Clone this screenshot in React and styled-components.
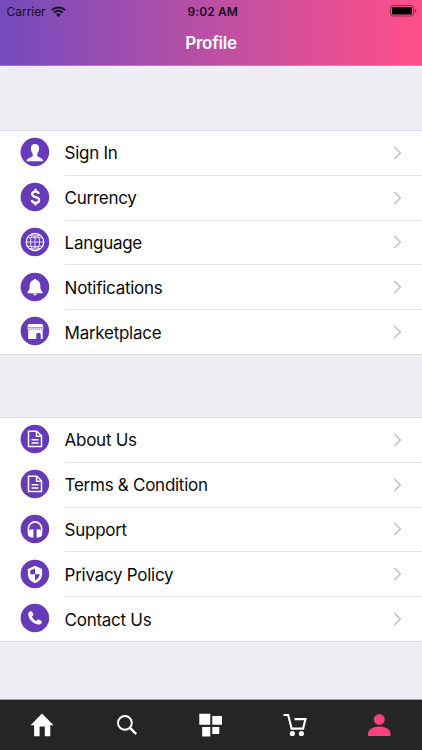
import styled, { createGlobalStyle } from "styled-components";

const accountItems = [
  { label: "Sign In", icon: "person" },
  { label: "Currency", icon: "dollar" },
  { label: "Language", icon: "globe" },
  { label: "Notifications", icon: "bell" },
  { label: "Marketplace", icon: "store" },
];

const infoItems = [
  { label: "About Us", icon: "doc" },
  { label: "Terms & Condition", icon: "doc" },
  { label: "Support", icon: "headphones" },
  { label: "Privacy Policy", icon: "shield" },
  { label: "Contact Us", icon: "phone" },
];

// all drawn on a 28x28 badge
const glyphs = {
  person: (
    <path
      fill="#fff"
      d="M14 6c2.900 0 4.200 1.800 4.100 4.500-.1 2.200-.8 4.100-1.800 5.200v2.200c.3 1.200 5.600 1.700 6.100 5.300H5.600c.5-3.600 5.800-4.100 6.100-5.300v-2.200c-1-1.100-1.700-3-1.800-5.200C9.800 7.800 11.100 6 14 6z"
    />
  ),
  dollar: (
    <g fill="none" stroke="#fff" strokeWidth="2.200">
      <path d="M17.900 10.900c-.4-1.500-1.700-2.300-3.400-2.300-1.900 0-3.300 1-3.300 2.600 0 3.900 7 1.900 7 5.800 0 1.700-1.500 2.800-3.600 2.800s-3.600-1.100-3.800-2.800" />
      <path d="M14.500 5.700v3M14.500 19.600v3" />
    </g>
  ),
  globe: (
    <g fill="none" stroke="#fff" strokeWidth="0.8">
      <circle cx="14" cy="14" r="8.700" strokeWidth="1.200" />
      <ellipse cx="14" cy="14" rx="4.500" ry="8.700" />
      <path d="M14 5.300v17.400M5.300 14h17.400M6.400 9.700h15.200M6.400 18.300h15.200M8.500 7.300q5.500 2 11 0M8.500 20.700q5.500-2 11 0" />
    </g>
  ),
  bell: (
    <path
      fill="#fff"
      d="M14 6c.8 0 1.200.5 1.300 1.100 2.800.6 4 2.800 4 5.400 0 3.700.4 5 2.200 6.400v1.400h-15v-1.400c1.800-1.400 2.200-2.700 2.200-6.400 0-2.600 1.200-4.800 4-5.400C12.800 6.500 13.200 6 14 6zM12.200 20.700h3.600c0 1-.8 1.600-1.800 1.600s-1.800-.6-1.800-1.600z"
    />
  ),
  store: (
    <>
      <path
        fill="#fff"
        d="M7.200 7h14.400l.9 3.600H6.300zM6.300 11.200h16.200v.9q-1 1.400-2 .2-1 1.200-2 0-1 1.200-2.100 0-1 1.200-2 0-1 1.200-2 0-1 1.200-2.100 0-1 1.200-2 0-1 1.200-2-.2z"
      />
      <path
        fill="#fff"
        d="M7.200 13h14.500v8.900h-2v-4.400c0-1-.7-1.600-1.600-1.600h-1.200c-1 0-1.600.6-1.600 1.600v4.400H7.200z"
      />
    </>
  ),
  doc: (
    <path
      fill="none"
      stroke="#fff"
      strokeWidth="1.500"
      d="M7.500 6.200h8.400l4.600 4.500v10.800h-13zM15.500 6.200v5h5M10.500 14.700h7M10.500 17.900h7"
    />
  ),
  headphones: (
    <>
      <path fill="none" stroke="#fff" strokeWidth="1.600" d="M7.400 17v-3.500a6.600 6.600 0 0 1 13.200 0V17" />
      <path
        fill="#fff"
        d="M12.400 14.200v8.400c-3.600.3-5.700-1.200-5.700-4.300s2.100-4.200 5.700-4.100zM15.600 14.200c3.600-.1 5.700 1 5.700 4.100s-2.100 4.600-5.700 4.300z"
      />
    </>
  ),
  shield: (
    <>
      <path fill="#fff" d="M14 5.800l7.100 3.100v5c0 4.300-2.800 7.700-7.100 9-4.300-1.300-7.100-4.700-7.100-9v-5z" />
      <path fill="#673ab7" d="M14 8.600v5.700h4.700c-.3 2.700-2 4.900-4.700 6v-6H9.200v-3.800z" />
    </>
  ),
  phone: (
    <path
      fill="#fff"
      d="M9.500 7.300c.8-.3 1.500.1 1.900.9l.9 1.900c.3.700.2 1.200-.4 1.700l-1 .8c.9 2 2.400 3.500 4.500 4.500l1-1.100c.4-.5 1-.6 1.600-.3l2.100 1c.8.4 1 1 .6 1.800-.6 1.300-1.500 2.200-2.900 2.100C12.300 20.300 7.300 15 7.200 10c0-1.400.9-2.300 2.300-2.700z"
    />
  ),
};

const Menu = ({ items }) => (
  <List>
    {items.map(({ label, icon }) => (
      <Row key={label}>
        <Badge width={28} height={28} viewBox="0 0 28 28">
          <circle cx="13.900" cy="14" r="14.300" fill="#673ab7" />
          {glyphs[icon]}
        </Badge>
        <RowBody>
          <Label>{label}</Label>
          <svg width={9} height={14} viewBox="0 0 9 14">
            <path d="M1.300 1l6 6-6 6" fill="none" stroke="#c4c4c8" strokeWidth="1.700" />
          </svg>
        </RowBody>
      </Row>
    ))}
  </List>
);

const App = () => (
  <Screen>
    <GlobalStyle />
    <Header>
      <StatusBar>
        <Carrier>
          Carrier
          <svg width={15} height={11} viewBox="0 0 15 11">
            <g fill="none" stroke="#180d24" strokeWidth="2">
              <path d="M.8 4.100a9.600 9.600 0 0 1 13.400 0M3.100 6.500a6.300 6.300 0 0 1 8.800 0" />
            </g>
            <path fill="#180d24" d="M5 8.500a3.600 3.600 0 0 1 5 0L7.500 11z" />
          </svg>
        </Carrier>
        <Clock>9:02 AM</Clock>
        <Battery width={27} height={12} viewBox="0 0 27 12">
          <rect x=".5" y=".5" width="23" height="10.500" rx="2.500" fill="none" stroke="#000" strokeOpacity=".45" />
          <rect x="2" y="2" width="20" height="7.500" rx="1.300" />
          <path d="M25 4v4c1-.4 1.400-1.100 1.400-2s-.4-1.600-1.400-2z" fillOpacity=".45" />
        </Battery>
      </StatusBar>
      <Title>Profile</Title>
    </Header>
    <Content>
      <Menu items={accountItems} />
      <Menu items={infoItems} />
    </Content>
    <TabBar>
      <Tab>
        <svg width={24} height={24} viewBox="0 0 24 24" fill="#fff">
          <path d="M12 .4L23.500 12.200h-3.200v11h-5.500v-9.700H9.600v9.700H4.100v-11H.6z" />
        </svg>
      </Tab>
      <Tab>
        <svg width={22} height={22} viewBox="0 0 22 22" fill="none" stroke="#fff">
          <circle cx="8.900" cy="8.900" r="6.900" strokeWidth="1.900" />
          <path d="M13.700 13.700l6.500 6.500" strokeWidth="2.400" />
        </svg>
      </Tab>
      <Tab>
        <svg width={24} height={24} viewBox="0 0 24 24" fill="#fff">
          <path d="M.3.700h11v11h-11zM13.300 3H23v8.700h-9.700zM3.200 14h8.100v9.600H3.200zM13.300 14h7v7h-7z" />
        </svg>
      </Tab>
      <Tab>
        <svg width={24} height={24} viewBox="0 0 24 24" fill="none" stroke="#fff" strokeWidth="2.100">
          <path d="M.5 2h4.700l3.400 13.600h11.500l2.400-9.500H11.500" />
          <circle cx="9.300" cy="20.500" r="2.600" fill="#fff" stroke="none" />
          <circle cx="18.400" cy="20.500" r="2.600" fill="#fff" stroke="none" />
        </svg>
      </Tab>
      <Tab>
        <svg width={24} height={24} viewBox="0 0 24 24" fill="#ff4081">
          <circle cx="11.300" cy="6.400" r="5.400" />
          <path d="M.1 23v-2.600c0-3.700 5-6.900 11.200-6.900s11.200 3.200 11.200 6.900V23z" />
        </svg>
      </Tab>
    </TabBar>
  </Screen>
);

const GlobalStyle = createGlobalStyle`
  body {
    margin: 0;
    font-family: Inter, "Liberation Sans", sans-serif;
  }

  svg {
    display: block;
    flex-shrink: 0;
    overflow: visible;
  }
`;

const Screen = styled.div`
  width: 422px;
  height: 750px;
  display: flex;
  flex-direction: column;
  overflow: hidden;
  background-color: #efeef5;
`;

const Header = styled.header`
  box-sizing: border-box;
  height: 66px;
  border-bottom: 1px solid rgba(255, 255, 255, 0.25);
  background: linear-gradient(90deg, #734bbd, #b94fa5 48%, #ff4f88);
`;

const StatusBar = styled.div`
  height: 22px;
  padding: 0 5px 0 6.6px;
  display: grid;
  grid-template-columns: 1fr auto 1fr;
  align-items: center;
  color: #180d24;
  font-size: 12px;
`;

const Carrier = styled.div`
  display: flex;
  align-items: center;
  gap: 5px;
  letter-spacing: -0.05px;
`;

const Clock = styled.div`
  padding-left: 2px;
  font-weight: 600;
  letter-spacing: 0.1px;
`;

const Battery = styled.svg`
  justify-self: end;
`;

const Title = styled.h1`
  margin: 0;
  line-height: 43px;
  text-align: center;
  font-size: 17px;
  font-weight: 600;
  letter-spacing: -0.25px;
  color: #fff;
`;

const Content = styled.main`
  flex: 1;
  padding-top: 64px;
  display: flex;
  flex-direction: column;
  gap: 62px;
`;

const List = styled.ul`
  margin: 0;
  padding: 0;
  list-style: none;
  border-top: 1px solid #dddce1;
  border-bottom: 1px solid #dddce1;
  background-color: #fff;
`;

const Badge = styled.svg`
  margin-bottom: 2.4px;
`;

const RowBody = styled.div`
  box-sizing: border-box;
  flex: 1;
  height: 100%;
  padding-right: 20px;
  display: flex;
  align-items: center;
  justify-content: space-between;
  border-bottom: 1px solid #e5e5e8;
`;

const Row = styled.li`
  height: 44.8px;
  padding-left: 21px;
  display: flex;
  align-items: center;
  gap: 15.600px;

  &:last-child {
    height: 43.8px;
  }

  &:last-child ${RowBody} {
    border-bottom: none;
  }
`;

const Label = styled.span`
  padding-top: 1px;
  font-size: 17px;
  letter-spacing: -0.27px;
  color: #0a0a0a;
`;

const TabBar = styled.nav`
  box-sizing: border-box;
  height: 51px;
  display: grid;
  grid-template-columns: repeat(5, 1fr);
  border-top: 1px solid #a09fa5;
  background-color: #252525;
`;

const Tab = styled.div`
  display: flex;
  align-items: center;
  justify-content: center;
`;

export default App;
